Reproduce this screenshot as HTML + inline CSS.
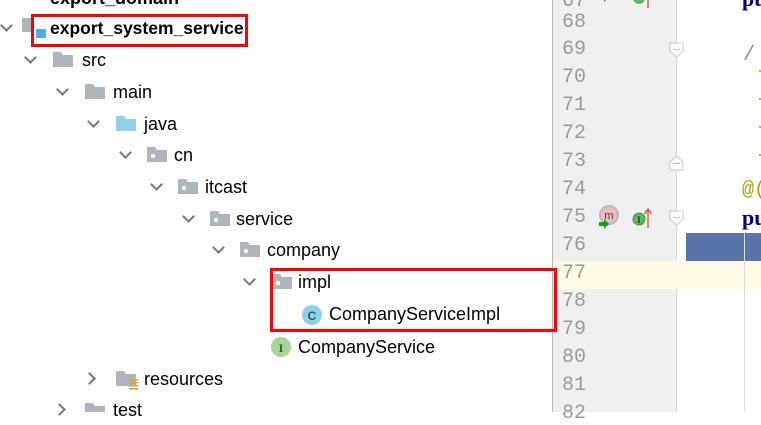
<!DOCTYPE html>
<html><head><meta charset="utf-8"><style>
*{margin:0;padding:0;box-sizing:border-box}
body{width:761px;height:412px;overflow:hidden;background:#fff;position:relative;font-family:"Liberation Sans","Noto Sans CJK SC",sans-serif;color:#000}
.a{position:absolute}
.t{position:absolute;font-size:18px;line-height:20px;white-space:nowrap}
.chev{position:absolute;width:9px;height:9px;border-right:2px solid #777;border-bottom:2px solid #777;transform:rotate(45deg)}
.chr{position:absolute;width:9px;height:9px;border-right:2px solid #777;border-bottom:2px solid #777;transform:rotate(-45deg)}
.ln{position:absolute;left:562px;font-family:"Liberation Mono",monospace;font-size:20px;color:#9a9a9a;line-height:20px}
</style></head><body>
<svg class="a" style="left:0;top:0" width="761" height="412">
<defs>
<g id="f"><path d="M0 0h8l2 3h10v12H0z" fill="#aeb5bc"/></g>
<g id="fp"><path d="M0 0h8l2 3h10v12H0z" fill="#aeb5bc"/><circle cx="6" cy="9" r="2.2" fill="#fff"/></g>
</defs>
<rect x="22" y="-10" width="10" height="8" fill="#aeb5bc"/><rect x="35" y="-10" width="11" height="10" fill="#4aaee0"/>
<rect x="22" y="18" width="12" height="14" fill="#aeb5bc"/><rect x="36" y="29" width="10" height="9" fill="#4aaee0"/>
<use href="#f" x="53" y="52"/>
<use href="#f" x="85" y="84"/>
<path d="M116 116h8l2 3h10v12H116z" fill="#8fd0ea"/>
<use href="#fp" x="147" y="147"/>
<use href="#fp" x="178" y="179"/>
<use href="#fp" x="210" y="211"/>
<use href="#fp" x="240" y="242"/>
<use href="#fp" x="272" y="274"/>
<circle cx="312" cy="315" r="10" fill="#8dd0ea"/><text x="312" y="320" font-size="12" font-weight="bold" text-anchor="middle" fill="#3d4f5c" font-family="Liberation Sans">C</text>
<circle cx="281" cy="347" r="10" fill="#a6d596"/><text x="281" y="352" font-size="12" font-weight="bold" text-anchor="middle" fill="#3d5a3a" font-family="Liberation Serif">I</text>
<path d="M116 371h8l2 3h10v12H116z" fill="#aeb5bc"/>
<rect x="129" y="379" width="9" height="1.6" fill="#e0a030"/><rect x="129" y="382" width="9" height="1.6" fill="#e0a030"/><rect x="129" y="385" width="9" height="1.6" fill="#e0a030"/><rect x="129" y="388" width="9" height="1.6" fill="#e0a030"/>
<use href="#f" x="85" y="403"/>
<rect x="552" y="0" width="1" height="412" fill="#b8b8b8"/>
<rect x="553" y="0" width="124" height="412" fill="#f0f0f0"/>
<rect x="676" y="0" width="1" height="412" fill="#d5d5d5"/>
<rect x="553" y="261" width="208" height="28" fill="#fefae6"/>
<rect x="686" y="233" width="75" height="28" fill="#5a74a9"/>
<rect x="744" y="233" width="1" height="179" fill="#dcdcdc"/>
<path d="M670 43h13v8l-6.5 6l-6.5-6z" fill="#fff" stroke="#c8c8c8"/><rect x="673" y="49" width="7" height="1" fill="#bbb"/>
<path d="M670 170h13v-8l-6.5-6l-6.5 6z" fill="#fff" stroke="#c8c8c8"/><rect x="673" y="163" width="7" height="1" fill="#bbb"/>
<path d="M670 211h13v8l-6.5 6l-6.5-6z" fill="#fff" stroke="#c8c8c8"/><rect x="673" y="217" width="7" height="1" fill="#bbb"/>
<circle cx="609" cy="215" r="9" fill="#f4b8c0" stroke="#b8bcc0" stroke-width="2"/><text x="609" y="219" font-size="11" text-anchor="middle" fill="#444" font-family="Liberation Sans">m</text>
<path d="M599 222h5v-3l5 5l-5 5v-3h-5z" fill="#1aa01a"/>
<path d="M599 -5h5v-3l5 5l-5 5v-3h-5z" fill="#1aa01a"/>
<circle cx="639" cy="219" r="6" fill="#5cb85c" stroke="#3a9a3a"/><text x="639" y="223" font-size="9" font-weight="bold" text-anchor="middle" fill="#333" font-family="Liberation Serif">I</text>
<path d="M648 228v-18M644.5 214l3.5-5l3.5 5" stroke="#e05a40" stroke-width="1.5" fill="none"/>
<circle cx="639" cy="-2" r="6" fill="#5cb85c"/><path d="M648 8v-12" stroke="#e05a40" stroke-width="1.5"/>
<text x="742" y="6" font-size="22" font-weight="bold" fill="#000080" font-family="Liberation Serif">pu</text>
<text x="743" y="60" font-size="20" fill="#8090b0" font-family="Liberation Mono">/</text>
<rect x="759" y="70" width="2" height="2" fill="#c8b040"/><rect x="759" y="98" width="2" height="2" fill="#c8b040"/><rect x="759" y="126" width="2" height="2" fill="#c8b040"/><rect x="759" y="154" width="2" height="2" fill="#c8b040"/>
<text x="742" y="195" font-size="20" fill="#b0a000" font-family="Liberation Mono">@(</text>
<text x="742" y="225" font-size="22" font-weight="bold" fill="#000080" font-family="Liberation Serif">pu</text>
<rect x="32.5" y="15.5" width="214" height="30" fill="none" stroke="#f00" stroke-width="3"/>
<rect x="271.5" y="269.5" width="284" height="61" fill="none" stroke="#f00" stroke-width="3"/>
</svg>
<div class="chev" style="left:2px;top:21px"></div>
<div class="chev" style="left:26px;top:53px"></div>
<div class="chev" style="left:58px;top:85px"></div>
<div class="chev" style="left:89px;top:117px"></div>
<div class="chev" style="left:121px;top:148px"></div>
<div class="chev" style="left:152px;top:180px"></div>
<div class="chev" style="left:184px;top:212px"></div>
<div class="chev" style="left:214px;top:243px"></div>
<div class="chev" style="left:245px;top:275px"></div>
<div class="chr" style="left:85px;top:374px"></div>
<div class="chr" style="left:55px;top:405px"></div>
<div class="t" style="left:50px;top:-12px;font-weight:bold">export_domain</div>
<div class="t" style="left:50px;top:18px;font-weight:bold;font-size:17.5px">export_system_service</div>
<div class="t" style="left:82px;top:50px">src</div>
<div class="t" style="left:113px;top:82px">main</div>
<div class="t" style="left:144px;top:114px">java</div>
<div class="t" style="left:174px;top:145px">cn</div>
<div class="t" style="left:205px;top:177px">itcast</div>
<div class="t" style="left:236px;top:209px">service</div>
<div class="t" style="left:267px;top:240px">company</div>
<div class="t" style="left:298px;top:272px">impl</div>
<div class="t" style="left:329px;top:304px">CompanyServiceImpl</div>
<div class="t" style="left:298px;top:337px">CompanyService</div>
<div class="t" style="left:144px;top:369px">resources</div>
<div class="t" style="left:113px;top:400px">test</div>
<div class="ln" style="top:-8px">67</div>
<div class="ln" style="top:13px">68</div>
<div class="ln" style="top:40px">69</div>
<div class="ln" style="top:68px">70</div>
<div class="ln" style="top:96px">71</div>
<div class="ln" style="top:124px">72</div>
<div class="ln" style="top:152px">73</div>
<div class="ln" style="top:180px">74</div>
<div class="ln" style="top:208px">75</div>
<div class="ln" style="top:236px">76</div>
<div class="ln" style="top:264px">77</div>
<div class="ln" style="top:292px">78</div>
<div class="ln" style="top:320px">79</div>
<div class="ln" style="top:348px">80</div>
<div class="ln" style="top:376px">81</div>
<div class="ln" style="top:404px">82</div>
</body></html>
